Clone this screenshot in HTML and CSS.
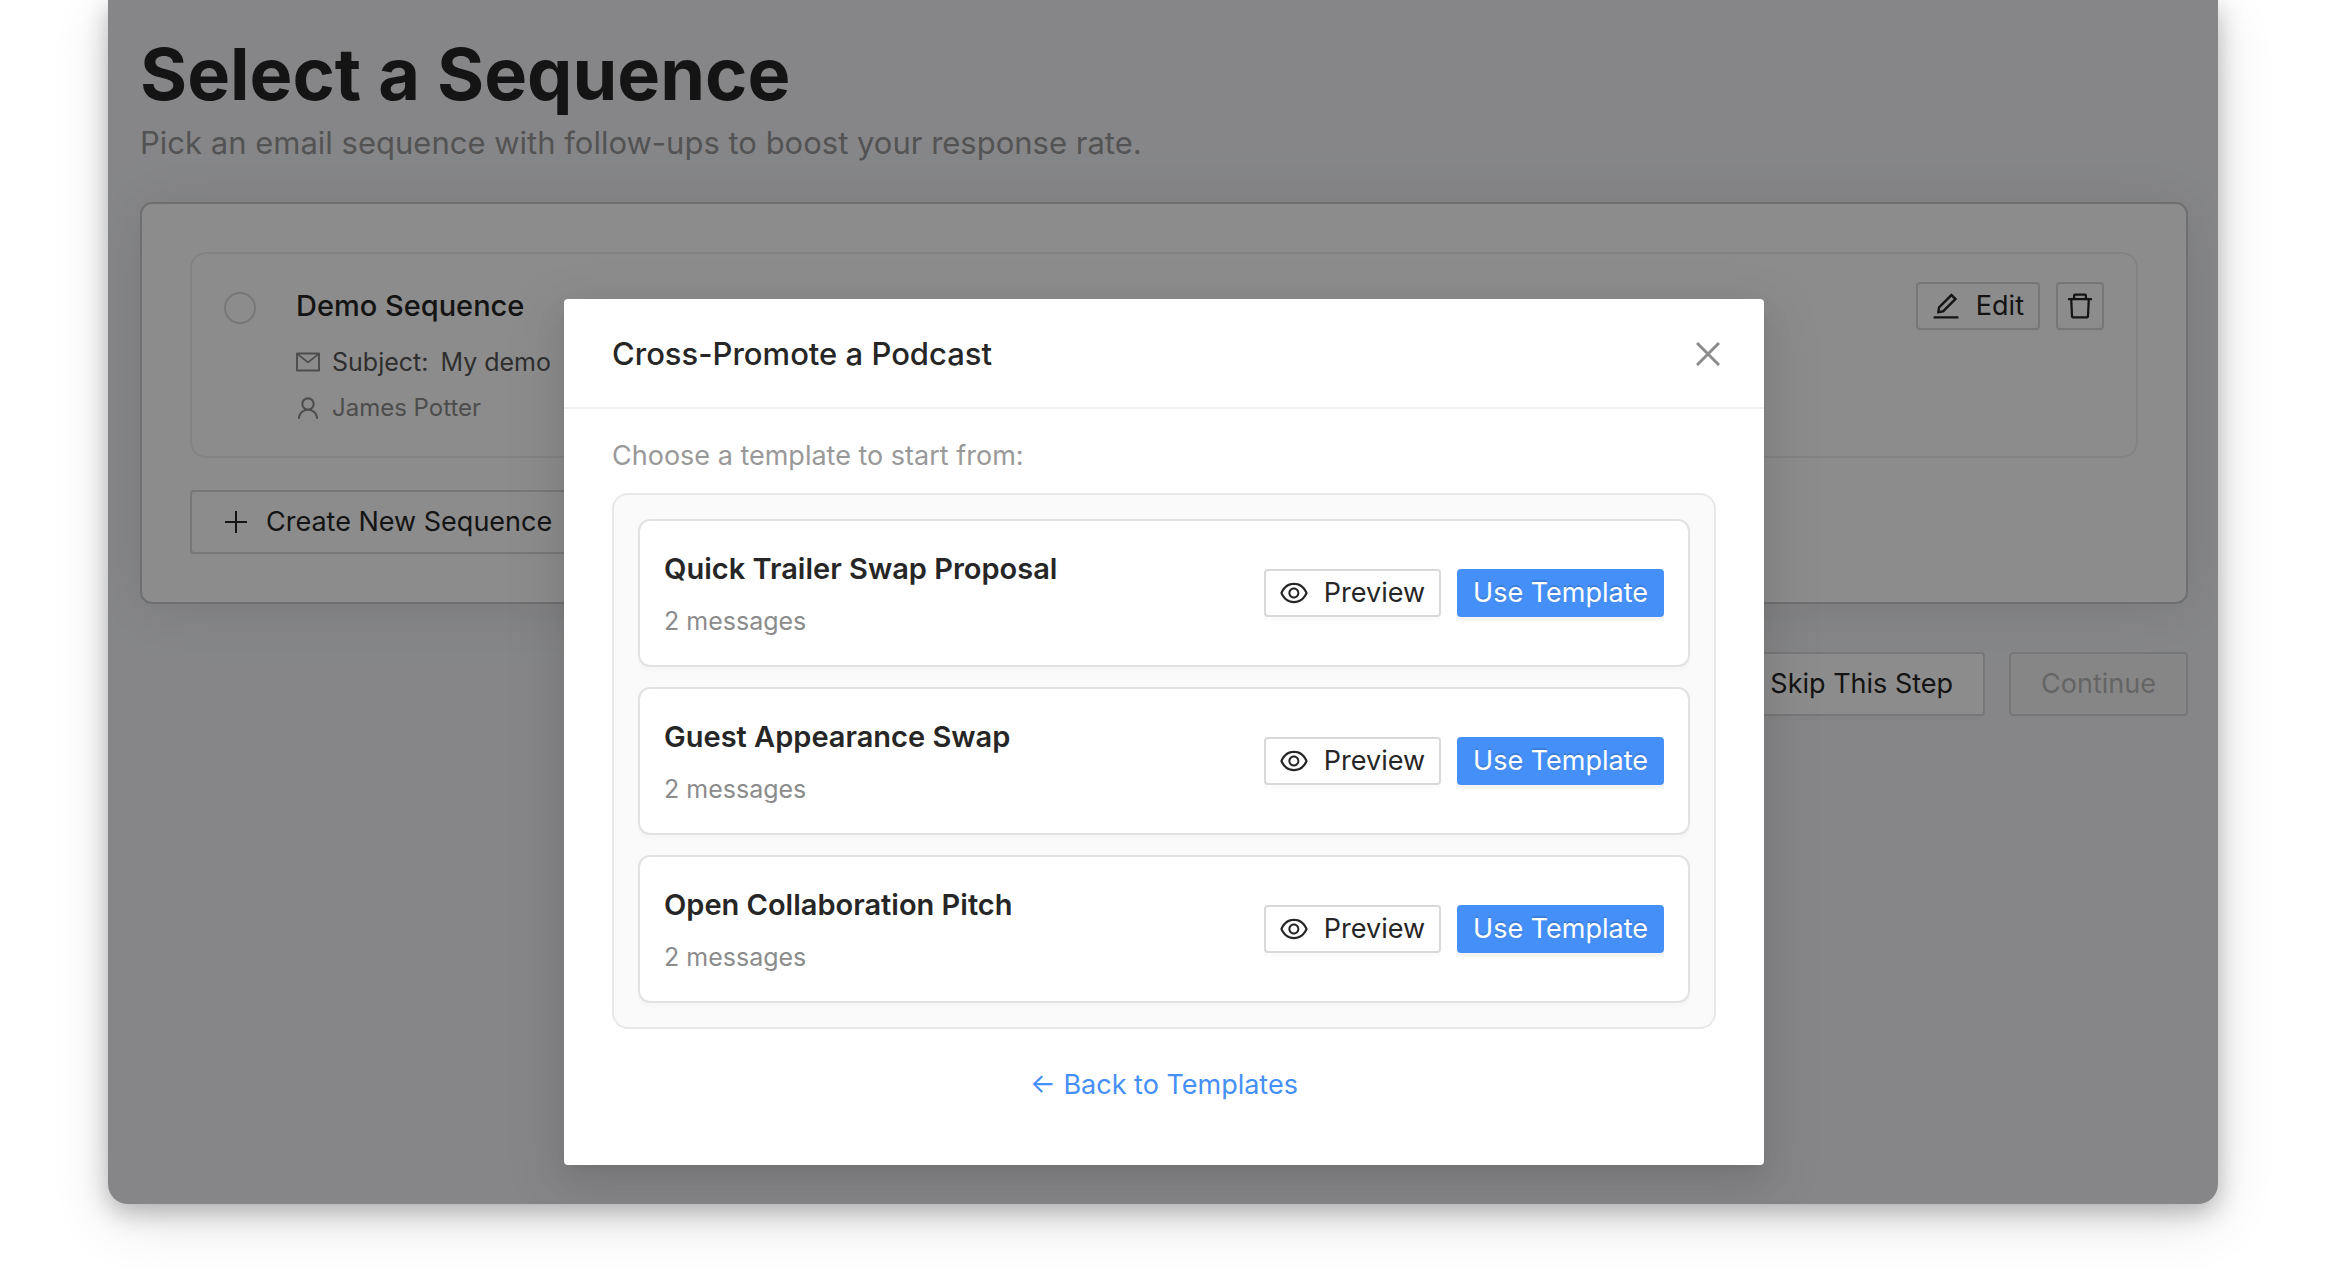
FILE: index.html
```html
<!DOCTYPE html>
<html lang="en">
<head>
    <meta charset="UTF-8">
    <meta name="viewport" content="width=device-width, initial-scale=1.0">
    <title>Select a Sequence</title>
    <link rel="stylesheet" href="styles.css">
</head>
<body>
    <!-- shared icons -->
    <svg class="sprite" aria-hidden="true">
        <symbol id="icon-eye" viewBox="64 64 896 896"><path d="M942.2 486.2C847.4 286.5 704.1 186 512 186c-192.2 0-335.4 100.5-430.2 300.3a60.3 60.3 0 000 51.5C176.6 737.5 319.9 838 512 838c192.2 0 335.4-100.5 430.2-300.3 7.7-16.2 7.7-35 0-51.5zM512 766c-161.3 0-279.4-81.8-362.7-254C232.6 339.8 350.7 258 512 258c161.3 0 279.4 81.8 362.7 254C791.5 684.2 673.4 766 512 766zm-4-430c-97.2 0-176 78.8-176 176s78.8 176 176 176 176-78.8 176-176-78.8-176-176-176zm0 288c-61.9 0-112-50.1-112-112s50.1-112 112-112 112 50.1 112 112-50.1 112-112 112z"/></symbol>
        <symbol id="icon-edit" viewBox="64 64 896 896"><path d="M257.7 752c2 0 4-.2 6-.5L431.9 722c2-.4 3.9-1.3 5.3-2.8l423.9-423.9a9.96 9.96 0 000-14.1L694.9 114.9c-1.9-1.9-4.4-2.9-7.1-2.9s-5.2 1-7.1 2.9L256.8 538.8c-1.5 1.5-2.4 3.3-2.8 5.3l-29.5 168.2a33.5 33.5 0 009.4 29.8c6.6 6.4 14.9 9.9 23.8 9.9zm67.4-174.4L687.8 215l73.3 73.3-362.7 362.6-88.9 15.7 15.6-89zM880 836H144c-17.7 0-32 14.3-32 32v36c0 4.4 3.6 8 8 8h784c4.4 0 8-3.6 8-8v-36c0-17.7-14.3-32-32-32z"/></symbol>
        <symbol id="icon-delete" viewBox="64 64 896 896"><path d="M360 184h-8c4.4 0 8-3.6 8-8v8h304v-8c0 4.4 3.6 8 8 8h-8v72h72v-80c0-35.3-28.7-64-64-64H352c-35.3 0-64 28.7-64 64v80h72v-72zm504 72H160c-17.7 0-32 14.3-32 32v32c0 4.4 3.6 8 8 8h60.4l24.7 523c1.6 34.1 29.8 61 63.9 61h454c34.2 0 62.3-26.8 63.9-61l24.7-523H888c4.4 0 8-3.6 8-8v-32c0-17.7-14.3-32-32-32zM731.3 840H292.7l-24.2-512h487l-24.2 512z"/></symbol>
        <symbol id="icon-mail" viewBox="64 64 896 896"><path d="M928 160H96c-17.7 0-32 14.3-32 32v640c0 17.7 14.3 32 32 32h832c17.7 0 32-14.3 32-32V192c0-17.7-14.3-32-32-32zm-40 110.8V792H136V270.8l-27.6-21.5 39.3-50.5 42.8 33.3h643.1l42.8-33.3 39.3 50.5-27.7 21.5zM833.6 232L512 482 190.4 232l-42.8-33.3-39.3 50.5 27.6 21.5 341.6 265.6a55.99 55.99 0 0068.7 0L888 270.8l27.6-21.5-39.3-50.5-42.7 33.2z"/></symbol>
        <symbol id="icon-user" viewBox="64 64 896 896"><path d="M858.5 763.6a374 374 0 00-80.6-119.5 375.63 375.63 0 00-119.5-80.6c-.4-.2-.8-.3-1.2-.5C719.5 518 760 444.7 760 362c0-137-111-248-248-248S264 225 264 362c0 82.7 40.5 156 102.8 201.1-.4.2-.8.3-1.2.5-44.8 18.9-85 46-119.5 80.6a375.63 375.63 0 00-80.6 119.5A371.7 371.7 0 00136 901.8a8 8 0 008 8.2h60c4.4 0 7.9-3.5 8-7.8 2-77.2 33-149.5 87.8-204.3 56.7-56.7 132-87.9 212.2-87.9s155.5 31.2 212.2 87.9C779 752.7 810 825 812 902.2c.1 4.4 3.6 7.8 8 7.8h60a8 8 0 008-8.2 371.7 371.7 0 00-29.5-138.2zM512 534c-45.9 0-89.1-17.9-121.6-50.4S340 407.9 340 362c0-45.9 17.9-89.1 50.4-121.6S466.1 190 512 190s89.1 17.9 121.6 50.4S684 316.1 684 362c0 45.9-17.9 89.1-50.4 121.6S557.9 534 512 534z"/></symbol>
    </svg>

    <div class="window">
        <main class="page">
            <h1 class="page-title">Select a Sequence</h1>
            <p class="page-subtitle">Pick an email sequence with follow-ups to boost your response rate.</p>

            <section class="card">
                <div class="sequence">
                    <input type="radio" name="sequence" id="demo-sequence" class="radio">
                    <div class="sequence-info">
                        <div class="sequence-head">
                            <label for="demo-sequence" class="sequence-name">Demo Sequence</label>
                            <button type="button" class="btn btn-small"><svg class="icon"><use href="#icon-edit"/></svg>Edit</button>
                            <button type="button" class="btn btn-small btn-icon" aria-label="Delete"><svg class="icon"><use href="#icon-delete"/></svg></button>
                        </div>
                        <div class="meta meta-subject"><svg class="meta-icon"><use href="#icon-mail"/></svg><span>Subject:</span><span>My demo</span></div>
                        <div class="meta"><svg class="meta-icon"><use href="#icon-user"/></svg><span>James Potter</span></div>
                    </div>
                </div>
                <button type="button" class="btn"><svg class="icon" viewBox="0 0 28 28"><path d="M3 13h22v2H3zM13 3h2v22h-2z"/></svg>Create New Sequence</button>
            </section>

            <div class="actions">
                <button type="button" class="btn">Skip This Step</button>
                <button type="button" class="btn" disabled>Continue</button>
            </div>
        </main>

        <div class="mask">
            <div class="modal" role="dialog" aria-labelledby="modal-title">
                <div class="modal-header">
                    <h2 class="modal-title" id="modal-title">Cross-Promote a Podcast</h2>
                    <button type="button" class="close" aria-label="Close"><svg class="close-icon" viewBox="0 0 24 24"><path d="M1 1l22 22M23 1L1 23"/></svg></button>
                </div>
                <div class="modal-body">
                    <p class="hint">Choose a template to start from:</p>
                    <div class="templates">
                        <div class="template">
                            <div class="template-text">
                                <h3 class="template-name">Quick Trailer Swap Proposal</h3>
                                <p class="template-count">2 messages</p>
                            </div>
                            <button type="button" class="btn btn-small"><svg class="icon"><use href="#icon-eye"/></svg>Preview</button>
                            <button type="button" class="btn btn-small btn-primary">Use Template</button>
                        </div>
                        <div class="template">
                            <div class="template-text">
                                <h3 class="template-name">Guest Appearance Swap</h3>
                                <p class="template-count">2 messages</p>
                            </div>
                            <button type="button" class="btn btn-small"><svg class="icon"><use href="#icon-eye"/></svg>Preview</button>
                            <button type="button" class="btn btn-small btn-primary">Use Template</button>
                        </div>
                        <div class="template">
                            <div class="template-text">
                                <h3 class="template-name">Open Collaboration Pitch</h3>
                                <p class="template-count">2 messages</p>
                            </div>
                            <button type="button" class="btn btn-small"><svg class="icon"><use href="#icon-eye"/></svg>Preview</button>
                            <button type="button" class="btn btn-small btn-primary">Use Template</button>
                        </div>
                    </div>
                    <button type="button" class="back">← Back to Templates</button>
                </div>
            </div>
        </div>
    </div>
</body>
</html>
```
FILE: styles.css
```css
*{
    box-sizing: border-box;
}
body{
    margin: 0;
    min-height: 100vh;
    display: flex;
    padding: 0 108px 64px;
    background: #fff;
    color: #262626;
    font-family: Inter, "Liberation Sans", sans-serif;
    font-size: 27px;
    line-height: 44px;
}
h1, h2, h3, p{
    margin: 0;
}
button{
    font: inherit;
    cursor: pointer;
}
.sprite{
    display: none;
}

/* window */
.window{
    position: relative;
    flex: 1;
    overflow: hidden;
    border-radius: 0 0 20px 20px;
    background: #f4f5f8;
    box-shadow: 0 8px 24px rgba(0,0,0,.25), 0 16px 60px rgba(0,0,0,.12);
}
.page{
    padding: 28px 30px 48px 32px;
}
.page-title{
    font-size: 72px;
    font-weight: 700;
    line-height: 92px;
}
.page-subtitle{
    margin-bottom: 36px;
    color: #979797;
    font-size: 31px;
    line-height: 46px;
}
.card{
    padding: 48px;
    border: 2px solid #cbcbcb;
    border-radius: 12px;
    background: #fff;
    box-shadow: 0 4px 60px rgba(50,40,60,.11);
}

/* sequence row */
.sequence{
    display: flex;
    gap: 40px;
    margin-bottom: 32px;
    padding: 28px 32px;
    border: 2px solid #ededed;
    border-radius: 16px;
}
.radio{
    appearance: none;
    flex: none;
    width: 32px;
    height: 32px;
    margin: 10px 0 0;
    border: 2px solid #d9d9d9;
    border-radius: 50%;
    background: #fff;
}
.sequence-info{
    flex: 1;
}
.sequence-head{
    display: flex;
    align-items: center;
    gap: 16px;
    margin-bottom: 12px;
}
.sequence-name{
    flex: 1;
    font-size: 29px;
    font-weight: 500;
}
.meta{
    display: flex;
    align-items: center;
    gap: 12px;
    color: #8c8c8c;
    font-size: 24px;
    line-height: 40px;
}
.meta-subject{
    margin-bottom: 6px;
    color: #555;
    font-size: 25px;
}
.meta-icon{
    width: 24px;
    height: 24px;
    fill: #8c8c8c;
}

/* buttons */
.btn{
    display: inline-flex;
    align-items: center;
    gap: 16px;
    height: 64px;
    padding: 0 30px;
    border: 2px solid #d9d9d9;
    border-radius: 4px;
    background: #fff;
    color: #262626;
    box-shadow: 0 4px 0 rgba(0,0,0,.015);
}
.btn:disabled{
    background: #f5f5f5;
    color: #b8b8b8;
    box-shadow: none;
    cursor: not-allowed;
}
.btn-small{
    height: 48px;
    padding: 0 14px;
}
.btn-icon{
    padding: 0 8px;
}
.btn-primary{
    border-color: #458ff8;
    background: #458ff8;
    color: #fff;
    text-shadow: 0 -2px 0 rgba(0,0,0,.12);
    box-shadow: 0 4px 0 rgba(0,0,0,.045);
}
.icon{
    width: 28px;
    height: 28px;
    fill: currentColor;
}
.actions{
    display: flex;
    justify-content: flex-end;
    gap: 24px;
    margin-top: 48px;
}

/* modal */
.mask{
    position: absolute;
    inset: 0;
    display: flex;
    justify-content: center;
    align-items: flex-start;
    padding: 299px 0 0 2px;
    background: rgba(0,0,0,.45);
}
.modal{
    width: 1200px;
    max-width: 90%;
    border-radius: 4px;
    background: #fff;
    box-shadow: 0 6px 12px -8px rgba(0,0,0,.12), 0 12px 32px rgba(0,0,0,.08), 0 18px 56px 16px rgba(0,0,0,.05);
}
.modal-header{
    display: flex;
    justify-content: space-between;
    align-items: center;
    padding: 33px 44px 31px 48px;
    border-bottom: 2px solid #f0f0f0;
}
.modal-title{
    font-size: 31px;
    font-weight: 500;
    line-height: 44px;
}
.close{
    display: flex;
    padding: 0;
    border: 0;
    background: none;
}
.close-icon{
    width: 24px;
    height: 24px;
    fill: none;
    stroke: #8c8c8c;
    stroke-width: 3;
}
.modal-body{
    padding: 25px 48px 48px;
}
.hint{
    margin-bottom: 15px;
    color: #999;
}
.templates{
    display: flex;
    flex-direction: column;
    gap: 20px;
    padding: 24px;
    border: 2px solid #e8e8e8;
    border-radius: 16px;
    background: #fafafa;
}
.template{
    display: flex;
    align-items: center;
    gap: 16px;
    padding: 24px;
    border: 2px solid #e2e2e2;
    border-radius: 12px;
    background: #fff;
    box-shadow: 0 4px 4px rgba(0,0,0,.02);
}
.template-text{
    flex: 1;
}
.template-name{
    margin-bottom: 8px;
    font-size: 29px;
    font-weight: 600;
    line-height: 48px;
}
.template-count{
    color: #8c8c8c;
    font-size: 25px;
    line-height: 40px;
}
.back{
    display: block;
    height: 64px;
    margin: 24px auto 0;
    padding: 0 32px;
    border: 0;
    background: none;
    color: #458ff8;
}
```
